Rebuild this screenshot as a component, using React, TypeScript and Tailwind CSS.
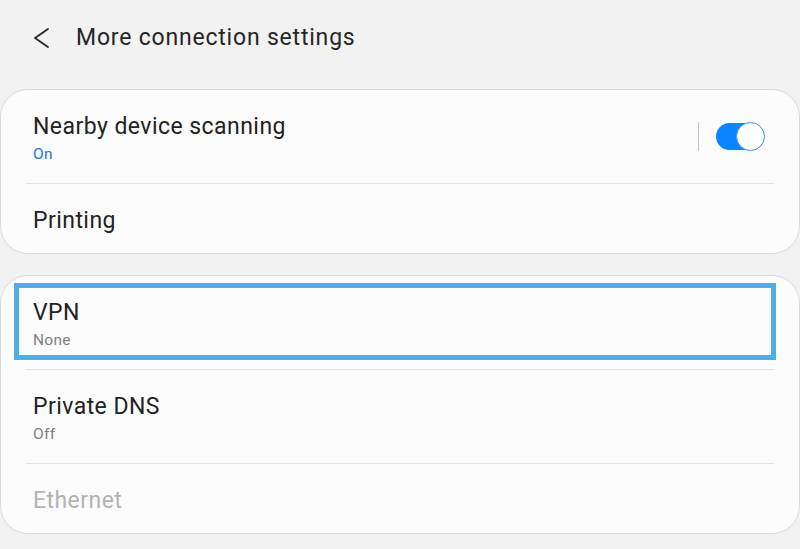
function Divider() {
  return <div className="mx-[25px] h-px bg-[#e3e3e3]" />;
}

function Row({ title, sub, subColor, dim, tall, highlight, children }: { title: string, sub?: string, subColor?: string, dim?: boolean, tall?: boolean, highlight?: boolean, children?: React.ReactNode }) {
  return (
    <div className={`relative flex items-center px-[32px] ${tall ? 'h-[93px]' : 'h-[69px]'}`}>
      {highlight && <div className="absolute left-[13px] right-[23px] top-[7px] bottom-[9px] border-[5px] border-[#4cb0e6]" />}
      <div className="flex flex-1 flex-col pt-[5px]">
        <span className={`text-[23px] leading-[28px] tracking-[0.45px] ${dim ? 'text-[#b3b3b3]' : 'text-[#222222]'}`}>{title}</span>
        {sub && <span className={`mt-[2px] text-[15.5px] leading-[22px] tracking-[0.3px] ${subColor ?? 'text-[#808080]'}`}>{sub}</span>}
      </div>
      {children}
    </div>
  );
}

export default function App() {
  return (
    <div className="h-[549px] w-[800px] overflow-hidden bg-[#f2f2f2] font-['Roboto',sans-serif]">
      {/* header */}
      <div className="flex h-[74px] items-center pt-[2px]">
        <svg width="20" height="24" viewBox="0 0 20 24" className="ml-[32px]" fill="none">
          <polyline points="16,3 3,12 16,21" stroke="#2a2a2a" strokeWidth="1.9" strokeLinecap="round" strokeLinejoin="round" />
        </svg>
        <h1 className="ml-[24px] text-[23px] tracking-[0.8px] text-[#262626]">More connection settings</h1>
      </div>

      <div className="mt-[15px] rounded-[28px] border border-[#d9d9d9] bg-[#fcfcfc]">
        <Row title="Nearby device scanning" sub="On" subColor="text-[#1b78d0]" tall>
          <div className="h-[29px] w-px bg-[#c4c4c4]" />
          <div className="relative ml-[17px] mr-[3px] h-[27px] w-[48px] rounded-full bg-[#0a84ff]">
            <div className="absolute right-[-1px] top-[-1px] h-[29px] w-[29px] rounded-full border-[1.5px] border-[#3b8fdc] bg-white" />
          </div>
        </Row>
        <Divider />
        <Row title="Printing" />
      </div>

      <div className="mt-[21px] rounded-[28px] border border-[#d9d9d9] bg-[#fcfcfc]">
        <Row title="VPN" sub="None" tall highlight />
        <Divider />
        <Row title="Private DNS" sub="Off" tall />
        <Divider />
        <Row title="Ethernet" dim />
      </div>
    </div>
  );
}
